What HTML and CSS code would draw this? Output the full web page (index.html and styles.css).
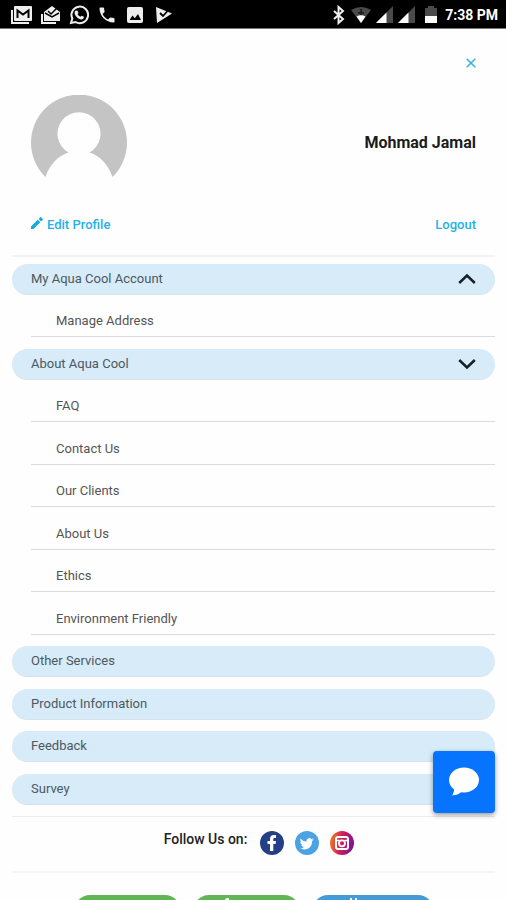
FILE: index.html
```html
<!DOCTYPE html>
<html lang="en">
<head>
<meta charset="utf-8">
<meta name="viewport" content="width=device-width, initial-scale=1">
<title>Aqua Cool</title>
<link rel="stylesheet" href="styles.css">
</head>
<body>
<header class="status">
  <div class="status-group status-left">
    <svg width="22" height="20" viewBox="0 0 22 20"><path d="M1 5v13h17" fill="none" stroke="#eee" stroke-width="2"/><rect x="3" y="1" width="18" height="15" rx="1" fill="#eee"/><path d="M6.500 13V5.500L12 9.500l5.500-4V13" fill="none" stroke="#000" stroke-width="2"/></svg>
    <svg width="20" height="20" viewBox="0 0 20 20"><path d="M1 9v9h14" fill="none" stroke="#eee" stroke-width="2"/><path d="M3 7l8-6 8 6v9H3z" fill="#eee"/><path d="M4 8l7 4 7-4M7 6l3 3 6-6" fill="none" stroke="#000" stroke-width="1.500"/></svg>
    <svg width="20" height="20" viewBox="0 0 20 20"><path d="M2 18l1.300-4.500A8.300 8.300 0 1 1 6.500 17z" fill="none" stroke="#eee" stroke-width="2"/><path d="M7 5.500l1.600.2.900 2.300-1 1.200c.8 1.300 1.700 2 3 2.600l1.200-1.100 2.200 1.100c0 2-1.400 2.900-3 2.600C8.500 13.600 5.500 10.500 5.600 7.400c.1-.8.700-1.600 1.400-1.900z" fill="#eee"/></svg>
    <svg width="20" height="20" viewBox="0 0 24 24"><path d="M6.600 10.800c1.400 2.800 3.800 5.200 6.600 6.600l2.200-2.200c.3-.3.700-.4 1-.2 1.100.4 2.300.6 3.600.6.600 0 1 .4 1 1V20c0 .6-.4 1-1 1C10.600 21 3 13.400 3 4c0-.6.500-1 1-1h3.500c.6 0 1 .4 1 1 0 1.300.2 2.500.6 3.600.1.300 0 .7-.2 1z" fill="#eee"/></svg>
    <svg width="20" height="20" viewBox="0 0 20 20"><rect x="2" y="2" width="16" height="16" rx="2" fill="#eee"/><path d="M4.500 15l3-4.500 2.300 2.700L13 9l3 6z" fill="#000"/></svg>
    <svg width="20" height="20" viewBox="0 0 20 20"><path d="M3 2l16 6.500L4 18z" fill="#eee"/><path d="M7 8l3 3L14.500 6" fill="none" stroke="#000" stroke-width="1.800"/></svg>
  </div>
  <div class="status-group status-right">
    <svg width="14" height="20" viewBox="0 0 14 20"><path d="M2 6l9 8-4.500 4V2L11 6l-9 8" fill="none" stroke="#eee" stroke-width="2"/></svg>
    <svg width="20" height="20" viewBox="0 0 20 20"><path d="M0 5Q10-1 20 5L10 18z" fill="#4a4a4a"/><path d="M5.500 11.500Q10 9 14.500 11.500L10 18z" fill="#fff"/><path d="M10 4v6M7 8h6" stroke="#222" stroke-width="2"/></svg>
    <svg width="17" height="20" viewBox="0 0 17 20"><path d="M17 1v17H0z" fill="#4a4a4a"/><path d="M10.500 7.500V18H0z" fill="#fff"/></svg>
    <svg width="17" height="20" viewBox="0 0 17 20"><path d="M17 1v17H0z" fill="#4a4a4a"/><path d="M10.500 7.500V18H0z" fill="#fff"/></svg>
    <svg class="battery" width="12" height="20" viewBox="0 0 12 20"><path d="M3 1h6v2h3v8H0V3h3z" fill="#4a4a4a"/><path d="M0 11h12v7H0z" fill="#fff"/></svg>
    <time>7:38 PM</time>
  </div>
</header>

<main class="page">
  <div class="close-row">
    <button class="close" type="button" aria-label="Close"><svg width="10" height="10" viewBox="0 0 10 10"><path d="M.7.700l8.600 8.600M9.300.700L.7 9.300" fill="none" stroke="#2eb4de" stroke-width="1.500"/></svg></button>
  </div>
  <section class="profile">
    <svg width="96" height="96" viewBox="0 0 96 96"><path d="M14.500 82A48 48 0 1 1 81.500 82C77 69 69 61 58.500 57.500A21.500 21.500 0 1 0 37.500 57.500C27 61 19 69 14.500 82z" fill="#c4c4c4"/></svg>
    <h1 class="name">Mohmad Jamal</h1>
  </section>
  <div class="actions">
    <a class="action" href="#"><svg width="12" height="12" viewBox="0 0 12 12"><path d="M0 9.500V12h2.500L9.300 5.200 6.800 2.700zM7.600 1.900l2.500 2.500 1.500-1.500c.4-.4.400-.8 0-1.200L10.300.4c-.4-.4-.8-.4-1.200 0z" fill="#12abdd"/></svg>Edit Profile</a>
    <a class="action" href="#">Logout</a>
  </div>

  <nav class="menu-wrap">
    <ul class="menu">
      <li><button class="bar" type="button">My Aqua Cool Account<svg width="18" height="12" viewBox="0 0 18 12"><path d="M1.200 10L9 2.500l7.800 7.500" fill="none" stroke="#14212b" stroke-width="2.500"/></svg></button></li>
      <li><a class="item" href="#">Manage Address</a></li>
      <li><button class="bar" type="button">About Aqua Cool<svg width="18" height="12" viewBox="0 0 18 12"><path d="M1.200 2L9 9.500 16.800 2" fill="none" stroke="#14212b" stroke-width="2.500"/></svg></button></li>
      <li><a class="item" href="#">FAQ</a></li>
      <li><a class="item" href="#">Contact Us</a></li>
      <li><a class="item" href="#">Our Clients</a></li>
      <li><a class="item" href="#">About Us</a></li>
      <li><a class="item" href="#">Ethics</a></li>
      <li><a class="item" href="#">Environment Friendly</a></li>
      <li><button class="bar" type="button">Other Services</button></li>
      <li><button class="bar" type="button">Product Information</button></li>
      <li><button class="bar" type="button">Feedback</button></li>
      <li><button class="bar" type="button">Survey</button></li>
    </ul>
  </nav>

  <section class="follow">
    <h2 class="follow-title">Follow Us on:</h2>
    <div class="social">
      <a href="#" aria-label="Facebook"><svg width="24" height="24" viewBox="0 0 24 24"><circle cx="12" cy="12" r="12" fill="#243f86"/><path d="M10 20v-7H7.500v-3H10V8c0-2.600 1.400-4 3.700-4H16v3h-1.500c-.9 0-1.200.4-1.200 1.200V10H16l-.4 3h-2.300v7z" fill="#fff"/></svg></a>
      <a href="#" aria-label="Twitter"><svg width="24" height="24" viewBox="0 0 24 24"><circle cx="12" cy="12" r="12" fill="#4ba3e3"/><path d="M18.500 8.300c-.5.200-1 .4-1.500.4.600-.3 1-.8 1.200-1.400-.6.300-1.200.5-1.800.7a2.900 2.900 0 0 0-4.900 2.600C9 10.500 7 9.300 5.700 7.500c-.8 1.400-.3 3 .9 3.900-.5 0-.9-.1-1.300-.4 0 1.400 1 2.600 2.300 2.900-.4.100-.9.100-1.300 0 .4 1.200 1.400 2 2.700 2-1.200.9-2.700 1.400-4.300 1.200 6 3.400 12.600-.3 12.400-6.900.6-.5 1-1.100 1.400-1.900z" fill="#fff"/></svg></a>
      <a href="#" aria-label="Instagram"><svg width="24" height="24" viewBox="0 0 24 24"><defs><linearGradient id="ig" x1="0" y1=".4" x2="1" y2=".6"><stop offset="0" stop-color="#ee7a25"/><stop offset=".45" stop-color="#cf1f5b"/><stop offset="1" stop-color="#7910a0"/></linearGradient></defs><circle cx="12" cy="12" r="12" fill="url(#ig)"/><rect x="6" y="6" width="12" height="12" rx="2" fill="none" stroke="#fff" stroke-width="2"/><path d="M6 9.500h3.500M14.500 9.500H18" stroke="#fff" stroke-width="1.500"/><circle cx="12" cy="12.300" r="3" fill="none" stroke="#fff" stroke-width="1.800"/></svg></a>
    </div>
  </section>

  <div class="contact">
    <button class="pill green" type="button" aria-label="Call"></button>
    <button class="pill green" type="button" aria-label="Locate"><svg width="12" height="12" viewBox="0 0 12 12"><path d="M3.500 2.500L6 0v8" fill="none" stroke="#fff" stroke-width="2"/></svg></button>
    <button class="pill blue" type="button" aria-label="Message"><svg width="12" height="12" viewBox="0 0 12 12"><path d="M2 0v5M7 0v5" stroke="#fff" stroke-width="2"/></svg></button>
  </div>
</main>

<button class="chat" type="button" aria-label="Chat"><svg width="30" height="30" viewBox="0 0 30 30"><ellipse cx="15" cy="13" rx="15" ry="12.500" fill="#fff"/><path d="M5 19c.8 3.500-.2 6.500-1.800 9.500 4.500-.4 7.800-1.700 10-4.500z" fill="#fff"/></svg></button>
</body>
</html>
```
FILE: styles.css
```css
* {
  box-sizing: border-box;
}

body {
  margin: 0;
  height: 100vh;
  overflow: hidden;
  background: #fefefe;
  color: #555;
  font: 13px/16px Roboto, sans-serif;
}

svg {
  display: block;
  flex: none;
}

button {
  margin: 0;
  padding: 0;
  border: 0;
  background: none;
  font: inherit;
  color: inherit;
  cursor: pointer;
}

a {
  color: inherit;
  text-decoration: none;
}

.status {
  display: flex;
  align-items: center;
  justify-content: space-between;
  height: 29px;
  padding: 2px 8px 0 11px;
  background: #000;
  border-bottom: 1px solid #777;
  color: #fff;
  font-size: 14px;
  font-weight: 700;
}

.status-group {
  display: flex;
  align-items: center;
}

.status-left {
  gap: 8px;
}

.status-right {
  gap: 5px;
}

.battery {
  margin: 0 3px 0 5px;
}

.page {
  padding: 0 11px 0 12px;
}

.close-row {
  display: flex;
  justify-content: flex-end;
  padding: 24px 14px 0 0;
}

.close {
  padding: 5px;
}

.profile {
  display: flex;
  align-items: center;
  justify-content: space-between;
  padding: 22px 19px 0 19px;
}

.name {
  margin: 0;
  color: #1c1c1c;
  font-size: 16px;
  font-weight: 700;
}

.actions {
  display: flex;
  justify-content: space-between;
  padding: 26px 19px 22px 19px;
  border-bottom: 2px solid #f3f3f3;
}

.action {
  display: flex;
  gap: 4px;
  color: #1fb2e6;
  font-weight: 500;
}

.menu-wrap {
  padding-top: 7px;
  border-bottom: 1px solid #ededed;
}

.menu {
  display: grid;
  grid-auto-rows: 1fr;
  min-height: 552px;
  margin: 0;
  padding: 0;
  list-style: none;
}

.bar {
  display: flex;
  align-items: center;
  justify-content: space-between;
  width: 100%;
  height: 31px;
  padding: 0 19px;
  border-bottom: 1px solid #d5e3ec;
  border-radius: 16px;
  background: #d8ebf8;
  color: #4b5963;
}

.item {
  display: flex;
  align-items: center;
  height: 31px;
  margin-left: 19px;
  padding-left: 25px;
  border-bottom: 1px solid #dcdcdc;
}

.follow {
  display: flex;
  justify-content: center;
  gap: 13px;
  padding: 14px 0 16px 11px;
  border-bottom: 2px solid #f5f5f5;
}

.follow-title {
  margin: 0;
  color: #222;
  font-size: 14px;
  font-weight: 500;
}

.social {
  display: flex;
  gap: 11px;
}

.contact {
  display: flex;
  justify-content: center;
  gap: 12px;
  padding-top: 22px;
}

.pill {
  display: flex;
  justify-content: center;
  width: 107px;
  height: 36px;
  padding: 3px 36px 0 0;
  border-radius: 16px;
}

.green {
  background: #62b554;
}

.blue {
  width: 122px;
  background: #459bd6;
}

.chat {
  position: fixed;
  right: 11px;
  bottom: 87px;
  display: flex;
  align-items: center;
  justify-content: center;
  width: 62px;
  height: 62px;
  border-radius: 4px;
  background: #0774ff;
  box-shadow: 0 2px 5px rgba(0, 0, 0, 0.4);
}
```
